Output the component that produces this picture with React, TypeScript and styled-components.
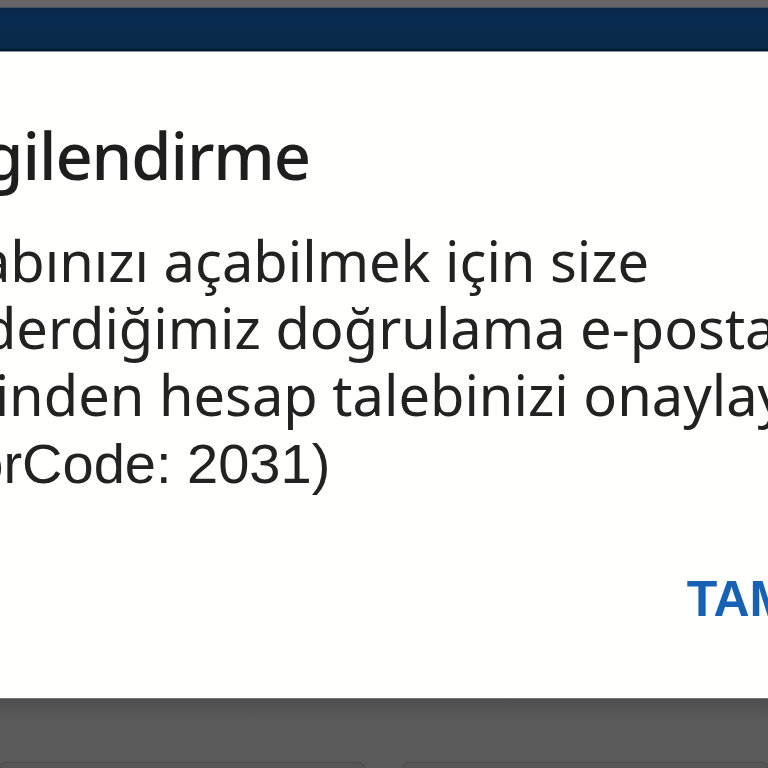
import React from 'react';
import styled, { createGlobalStyle } from 'styled-components';

const GlobalStyle = createGlobalStyle`
  html, body {
    margin: 0;
    padding: 0;
    width: 768px;
    height: 768px;
    overflow: hidden;
    background: #5a5a5a;
  }
  #root {
    height: 768px;
  }
`;

const Screen = styled.div`
  display: flex;
  flex-direction: column;
  width: 768px;
  height: 768px;
  overflow: hidden;
`;

const StatusStrip = styled.div`
  height: 8px;
  flex: none;
  background: #666669;
  border-bottom: 1px solid #4a5560;
  box-sizing: border-box;
`;

const AppBar = styled.div`
  height: 44px;
  flex: none;
  box-sizing: border-box;
  background: linear-gradient(#0c2744 0px, #0a2b52 6px, #0a2a4a 40px, #02101f 43px);
  border-bottom: 1px solid #7f97a8;
`;

// the dialog is wider than the window, its left and right edges are off screen
const Dialog = styled.div`
  flex: none;
  height: 646px;
  width: 1048px;
  margin-left: -121px;
  box-sizing: border-box;
  background: #fffffd;
  padding: 64px 58px 0 0;
  display: flex;
  flex-direction: column;
`;

const Title = styled.h1`
  margin: 0;
  padding-left: 30px;
  font-family: 'Noto Sans', sans-serif;
  font-weight: 500;
  font-size: 65px;
  letter-spacing: -1.1px;
  line-height: 78px;
  color: #1e1e1e;
  white-space: nowrap;
`;

const Message = styled.p`
  margin: 33px 0 0;
  font-family: 'Noto Sans', sans-serif;
  font-size: 56px;
  line-height: 67px;
  color: #222222;
  white-space: nowrap;
`;

const Code = styled.span`
  font-family: 'Liberation Sans', Arial, sans-serif;
`;

const Actions = styled.div`
  display: flex;
  justify-content: flex-end;
  margin-top: 73px;
`;

const OkButton = styled.button`
  border: none;
  background: none;
  padding: 0;
  font-family: 'Liberation Sans', Arial, sans-serif;
  font-weight: 700;
  font-size: 50px;
  color: #1862b5;
  cursor: pointer;
`;

const NavArea = styled.div`
  flex: 1;
  background: linear-gradient(#4e4e4e, #5a5a5a 20px);
  border-top: 1px solid #777777;
  display: flex;
  align-items: flex-end;
  gap: 37px;
`;

const NavTab = styled.div<{ grow: number }>`
  flex: ${({ grow }) => grow};
  height: 5px;
  border: 1px solid #4a4a4a;
  border-bottom: none;
  border-radius: 6px 6px 0 0;
  background: #565656;
`;

export default function App() {
  return (
    <>
      <GlobalStyle />
      <Screen>
        <StatusStrip />
        <AppBar />
        <Dialog>
          <Title>Bilgilendirme</Title>
          <Message>
            Hesabınızı açabilmek için size
            <br />
            gönderdiğimiz doğrulama e-postası
            <br />
            üzerinden hesap talebinizi onaylayınız
            <br />
            <Code>(ErrorCode: 2031)</Code>
          </Message>
          <Actions>
            <OkButton>TAMAM</OkButton>
          </Actions>
        </Dialog>
        <NavArea>
          <NavTab grow={365} />
          <NavTab grow={366} />
        </NavArea>
      </Screen>
    </>
  );
}
